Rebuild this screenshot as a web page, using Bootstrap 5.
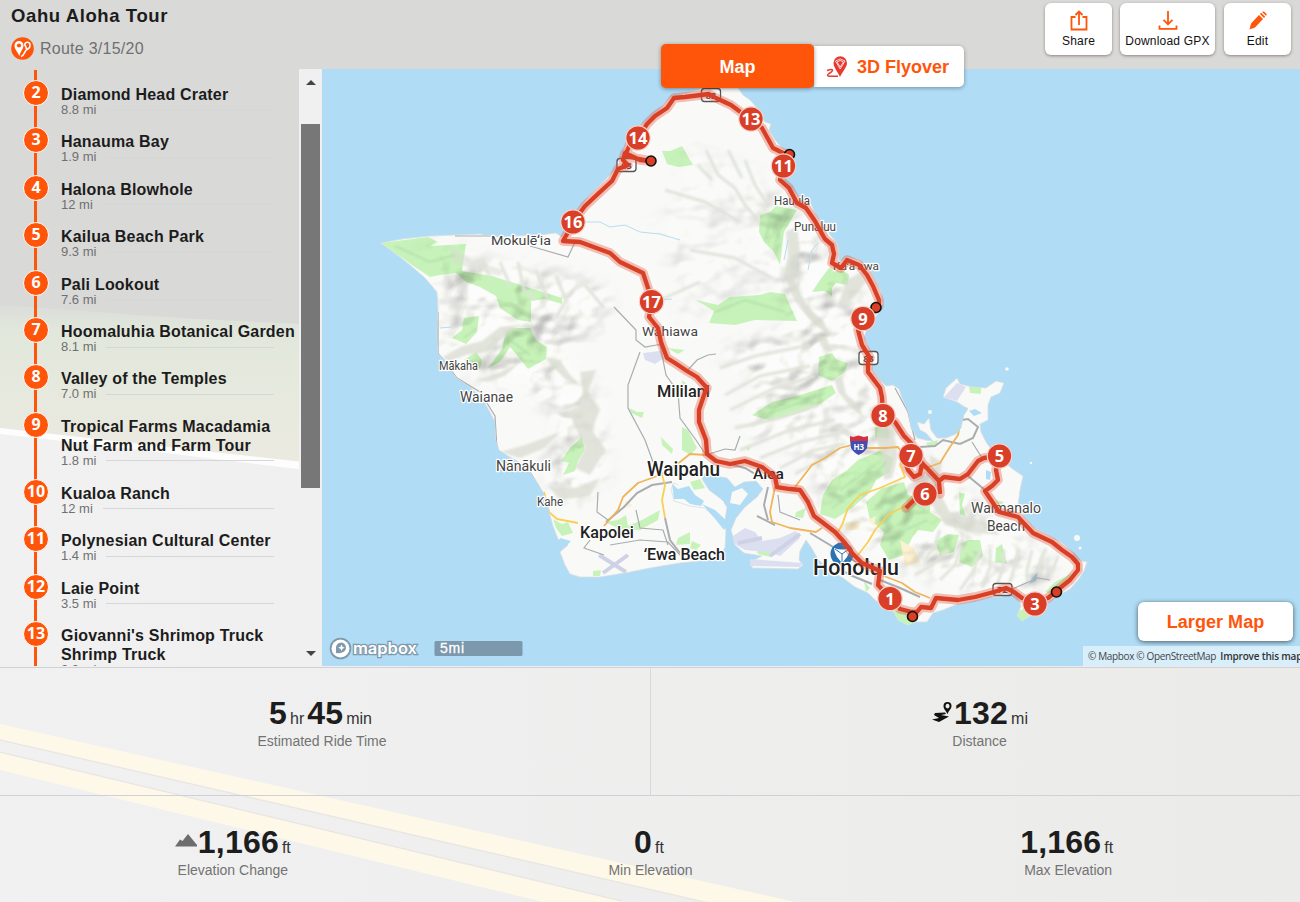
<!DOCTYPE html>
<html lang="en">
<head>
    <meta charset="UTF-8">
    <meta name="viewport" content="width=device-width, initial-scale=1.0">
    <title>Oahu Aloha Tour</title>
    <!-- Bootstrap CSS -->
    <link href="https://cdn.jsdelivr.net/npm/bootstrap@5.3.2/dist/css/bootstrap.min.css" rel="stylesheet">
    <style>
        body {
            font-family: "Liberation Sans", Arial, sans-serif;
            color: #1c1c1c;
            background: #eeeeed;
            height: 902px;
            overflow: hidden;
        }
        .page-bg { position: absolute; left: 0; top: 0; z-index: -1; }
        .orange { color: #ff550b; }

        /* Header */
        .top-bar { height: 69px; padding: 3px 9px 0 11px; }
        .tour-name { font-size: 18.5px; font-weight: 700; letter-spacing: .6px; line-height: 20px; margin: 3px 0 0; }
        .tour-sub { font-size: 16px; color: #707070; letter-spacing: .25px; line-height: 22px; margin-top: 11px; gap: 6px; }
        .tool-btn {
            height: 52px; border-radius: 6px; background: #fff; color: #111;
            font-size: 12px; line-height: 14px; padding: 7px 0 0; border: 0; gap: 3px;
            letter-spacing: .2px; box-shadow: 0 1px 3px rgba(80, 60, 50, .55); white-space: nowrap;
        }
        .w-share { width: 67px; }
        .w-gpx { width: 95px; margin: 0 9px 0 8px; }
        .w-edit { width: 67px; }

        /* Stop list */
        .main-row { height: 597px; }
        .side { width: 322px; }
        .stops { width: 299px; padding: 0; margin: 0; list-style: none; overflow: hidden; position: relative; }
        .stops::before { content: ""; position: absolute; left: 34px; top: 1px; bottom: 0; width: 3px; background: #ff550b; }
        .stop { padding: 17px 0 0 23px; height: 47.4px; position: relative; gap: 12px; }
        .stop-tall { height: 67px; }
        .stop-no {
            width: 26px; height: 26px; margin-top: -6px; flex: none; border-radius: 50%;
            border: 1.5px solid #fff; background: #ff550b; color: #fff;
            font-family: "Open Sans", sans-serif; font-weight: 700; font-size: 16px; line-height: 22px; text-align: center;
        }
        .stop-name { font-size: 16px; font-weight: 700; line-height: 18.8px; letter-spacing: .2px; white-space: nowrap; }
        .stop-dist { font-size: 13px; line-height: 12.4px; margin-top: -.8px; color: #707070; gap: 10px; width: 213px; white-space: nowrap; }
        .stop-dist::after { content: ""; flex: 1; height: 1px; background: #d4d6d7; }
        .scroller { width: 23px; background: #f0f0f0; padding: 11px 2px 10px; }
        .scroller-thumb { height: 364px; background: #777; width: 19px; margin-top: 39px; }

        /* Map */
        .map-pane { width: 978px; position: relative; }
        .map-pane > svg { display: block; }
        .view-tabs { position: absolute; left: 339px; top: -25px; }
        .tab-map {
            width: 153px; height: 44px; background: #ff550b; color: #fff; border-radius: 5px; z-index: 1;
            font-size: 18px; font-weight: 700; line-height: 47px; text-align: center; box-shadow: 0 1px 4px rgba(0, 0, 0, .4);
        }
        .tab-fly {
            width: 150px; height: 41px; background: #fff; border-radius: 0 5px 5px 0; gap: 9px;
            font-size: 18px; font-weight: 700; padding: 2px 0 0 12px; box-shadow: 0 1px 4px rgba(0, 0, 0, .35);
        }
        .larger {
            position: absolute; right: 7px; bottom: 25px; width: 155px; height: 39px; background: #fff; border-radius: 6px;
            font-size: 18px; font-weight: 700; line-height: 40px; text-align: center; letter-spacing: .05px;
            box-shadow: 0 1px 5px rgba(0, 0, 0, .6);
        }
        .attrib {
            position: absolute; right: 0; bottom: 0; width: 217px; height: 20px; padding-left: 5px; overflow: hidden;
            background: rgba(255, 255, 255, .5); font: 10px/21px "Open Sans", sans-serif; color: #444; white-space: nowrap;
            letter-spacing: -.36px;
        }
        .attrib b { font-weight: 600; margin-left: 2px; color: #333; letter-spacing: -.2px; }
        .relief { mix-blend-mode: multiply; opacity: .42; }
        .place { font-family: Roboto, "Noto Sans", sans-serif; fill: #444; stroke: #fff; stroke-width: 2.5px; paint-order: stroke; stroke-linejoin: round; }
        .place-big { fill: #222; font-weight: 500; }
        .pin text { font: 700 16.5px "Open Sans", sans-serif; fill: #fff; text-anchor: middle; }

        /* Stats */
        .stats-row { border-top: 1px solid #d0d1d5; text-align: center; }
        .stats-a { height: 128px; margin-top: 1px; }
        .stats-a > div { padding-top: 29px; }
        .stats-a > div:first-child { width: 651px; border-right: 1px solid #d8d9db; padding-right: 6px; }
        .stats-a > div:last-child { width: 649px; padding-left: 8px; }
        .stats-b { height: 107px; padding: 30px 23px 0 24px; }
        .num-line { font-size: 16px; line-height: 33px; height: 34px; color: #333; white-space: nowrap; }
        .num-line b { font-size: 32px; color: #1d1d1d; letter-spacing: .2px; margin: 0 3px; }
        .num-line > b:first-child { margin-left: -3px; }
        .num-line svg + div b { margin-left: 0; }
        .num-label { font-size: 14px; line-height: 20px; color: #737373; }
    </style>
</head>
<body>
    <!-- Road backdrop -->
    <svg class="page-bg" width="1300" height="902" viewBox="0 0 1300 902">
        <defs>
            <linearGradient id="verge" x1="0" y1="0" x2="0" y2="1">
                <stop offset="0" stop-color="#dbddd9"/>
                <stop offset=".15" stop-color="#e1e7dc"/>
                <stop offset=".5" stop-color="#e6e9dd"/>
                <stop offset="1" stop-color="#eceae1"/>
            </linearGradient>
            <linearGradient id="road" x1="0" y1="0" x2="1" y2="0">
                <stop offset="0" stop-color="#f1f1f1"/>
                <stop offset="1" stop-color="#ebebea"/>
            </linearGradient>
        </defs>
        <rect width="1300" height="902" fill="url(#road)"/>
        <path d="M0 0H1300V300L322 330L180 322L0 308Z" fill="#d9d9d8"/>
        <path d="M0 305L180 318L322 325V468L0 428Z" fill="url(#verge)"/>
        <path d="M0 428L150 445L322 464V472L150 451L0 434Z" fill="#fdfdfd"/>
        <path d="M0 724L795 902H708L0 739Z" fill="#fef8e9"/>
        <path d="M0 753L622 902H543L0 770Z" fill="#fef8e9"/>
        <path d="M0 740L708 903M0 752L622 901" stroke="#e9e4de" fill="none"/>
    </svg>

    <header class="top-bar d-flex justify-content-between">
        <div>
            <h1 class="tour-name">Oahu Aloha Tour</h1>
            <div class="tour-sub d-flex align-items-center">
                <svg width="23" height="23" viewBox="0 0 23 23">
                    <circle cx="11.5" cy="11.5" r="11.3" fill="#ff550b"/>
                    <path d="M8.500 19C6 14 3.500 12 3.500 8.500A4.500 4.500 0 0 1 12.500 8.500C12.500 12 9.500 14 8.500 19Z" fill="#fff"/>
                    <circle cx="8" cy="8.500" r="2.100" fill="#ff550b"/>
                    <path d="M10 19.500C14.500 18 12.500 14.500 16 12.500C19 11 19.500 8.500 18.800 6.500A2.800 2.800 0 0 0 13.700 7.500C14 9 15.500 10 15.300 12" fill="none" stroke="#fff" stroke-width="1.600"/>
                </svg>
                <span>Route 3/15/20</span>
            </div>
        </div>
        <div class="d-flex">
            <button class="tool-btn w-share d-flex flex-column align-items-center">
                <svg width="20" height="21" viewBox="0 0 20 21" fill="none" stroke="#ff550b" stroke-width="1.800">
                    <path d="M6.500 7H2.500V19.500H17.500V7H13.500M10 15V1.500M6.500 5L10 1.500L13.500 5"/>
                </svg>
                <span>Share</span>
            </button>
            <button class="tool-btn w-gpx d-flex flex-column align-items-center">
                <svg width="20" height="21" viewBox="0 0 20 21" fill="none" stroke="#ff550b" stroke-width="1.800">
                    <path d="M10 1V14M5.500 9.800L10 14.300L14.500 9.800M1.500 15.500V18.800H18.500V15.500"/>
                </svg>
                <span>Download GPX</span>
            </button>
            <button class="tool-btn w-edit d-flex flex-column align-items-center">
                <svg width="20" height="21" viewBox="0 0 20 21" fill="#ff550b">
                    <path d="M1.500 19.500L3 13.500L11 5L15 9L7 17.500ZM12 4L13.200 2.800L17.200 6.800L16 8ZM14.200 1.900L15 1.500Q15.800 1.200 16.500 2L18.300 3.800Q19 4.500 18.500 5.300L17.900 5.800Z"/>
                </svg>
                <span>Edit</span>
            </button>
        </div>
    </header>

    <main class="main-row d-flex">
        <aside class="side d-flex">
            <ul class="stops">
                <li class="stop d-flex"><span class="stop-no">2</span><div><div class="stop-name">Diamond Head Crater</div><div class="stop-dist d-flex align-items-center">8.8 mi</div></div></li>
                <li class="stop d-flex"><span class="stop-no">3</span><div><div class="stop-name">Hanauma Bay</div><div class="stop-dist d-flex align-items-center">1.9 mi</div></div></li>
                <li class="stop d-flex"><span class="stop-no">4</span><div><div class="stop-name">Halona Blowhole</div><div class="stop-dist d-flex align-items-center">12 mi</div></div></li>
                <li class="stop d-flex"><span class="stop-no">5</span><div><div class="stop-name">Kailua Beach Park</div><div class="stop-dist d-flex align-items-center">9.3 mi</div></div></li>
                <li class="stop d-flex"><span class="stop-no">6</span><div><div class="stop-name">Pali Lookout</div><div class="stop-dist d-flex align-items-center">7.6 mi</div></div></li>
                <li class="stop d-flex"><span class="stop-no">7</span><div><div class="stop-name">Hoomaluhia Botanical Garden</div><div class="stop-dist d-flex align-items-center">8.1 mi</div></div></li>
                <li class="stop d-flex"><span class="stop-no">8</span><div><div class="stop-name">Valley of the Temples</div><div class="stop-dist d-flex align-items-center">7.0 mi</div></div></li>
                <li class="stop stop-tall d-flex"><span class="stop-no">9</span><div><div class="stop-name">Tropical Farms Macadamia<br>Nut Farm and Farm Tour</div><div class="stop-dist d-flex align-items-center">1.8 mi</div></div></li>
                <li class="stop d-flex"><span class="stop-no">10</span><div><div class="stop-name">Kualoa Ranch</div><div class="stop-dist d-flex align-items-center">12 mi</div></div></li>
                <li class="stop d-flex"><span class="stop-no">11</span><div><div class="stop-name">Polynesian Cultural Center</div><div class="stop-dist d-flex align-items-center">1.4 mi</div></div></li>
                <li class="stop d-flex"><span class="stop-no">12</span><div><div class="stop-name">Laie Point</div><div class="stop-dist d-flex align-items-center">3.5 mi</div></div></li>
                <li class="stop stop-tall d-flex"><span class="stop-no">13</span><div><div class="stop-name">Giovanni's Shrimop Truck<br>Shrimp Truck</div><div class="stop-dist d-flex align-items-center">2.2 mi</div></div></li>
            </ul>
            <div class="scroller d-flex flex-column align-items-center">
                <svg width="10" height="5" viewBox="0 0 10 5"><path d="M0 5L5 0L10 5Z" fill="#444"/></svg>
                <div class="scroller-thumb"></div>
                <svg class="mt-auto" width="10" height="5" viewBox="0 0 10 5"><path d="M0 0L5 5L10 0Z" fill="#444"/></svg>
            </div>
        </aside>

        <section class="map-pane">
            <svg width="978" height="597" viewBox="322 69 978 597">
                <defs>
                    <path id="coast" d="M381 243L402 239L430 236L455 235L480 234L493 237L540 235L556 233L562 237L569 226L577 211L590 195L605 180L617 168L623 158L625 146L631 134L645 122L660 109L670 98L690 92L703 88L738 88L743 95L750 100L757 108L765 122L771 124L769 130L775 140L782 148L789 152L794 158L790 165L782 172L783 180L792 189L800 199L811 204L816 215L824 225L831 236L837 243L839 253L838 263L847 257L859 260L869 269L875 280L881 292L883 304L878 313L873 322L866 331L864 338L868 347L873 358L872 370L880 380L886 386L893 385L899 389L902 398L908 412L911 428L917 438L925 440L933 441L926 433L920 430L917 422L924 424L929 418L931 430L937 438L946 438L956 434L961 428L964 415L968 409L957 402L943 397L946 388L957 378L960 384L972 387L986 388L996 381L1004 383L1000 393L991 397L988 405L988 420L980 424L981 432L986 442L993 452L1005 463L1014 470L1023 476L1020 490L1018 505L1024 517L1034 528L1048 535L1062 543L1072 552L1077 560L1087 562L1084 571L1078 580L1070 589L1058 596L1047 603L1038 609L1030 616L1022 621L1017 616L1021 606L1018 597L1010 592L1002 597L990 597L970 602L955 605L943 610L933 613L927 622L916 622L908 625L898 620L894 612L884 607L874 599L868 593L855 587L843 578L828 569L818 559L811 547L806 540L800 551L799 560L803 565L798 569L752 568L752 561L762 556L744 553L735 545L731 530L736 518L745 507L757 497L763 489L756 481L744 482L735 487L727 478L716 476L705 473L702 479L709 490L721 499L727 507L725 520L715 516L704 508L690 506L674 501L671 489L674 483L686 489L694 500L708 506L718 514L726 530L725 548L718 556L700 561L680 563L650 568L625 573L600 577L580 577L570 574L565 565L560 552L568 545L558 539L553 526L550 515L547 500L540 487L530 472L519 462L508 456L499 450L496 440L495 422L491 414L482 398L470 387L457 378L450 370L445 360L438 353L437 335L438 310L437 292L425 278L410 265L396 254Z"/>
                    <clipPath id="land"><use href="#coast"/></clipPath>
                    <filter id="soft"><feGaussianBlur stdDeviation="1.3"/></filter>
                    <filter id="wide"><feGaussianBlur stdDeviation="10"/></filter>
                    <!-- Relief lighting for the mountain ranges -->
                    <filter id="hills" x="0" y="0" width="1" height="1" color-interpolation-filters="sRGB">
                        <feTurbulence type="fractalNoise" baseFrequency=".022 .028" numOctaves="3" seed="7"/>
                        <feColorMatrix values="0 0 0 0 0  0 0 0 0 0  0 0 0 0 0  1 0 0 0 0"/>
                        <feGaussianBlur stdDeviation="1"/>
                        <feDiffuseLighting surfaceScale="12" diffuseConstant="1.14" lighting-color="#fbfbf2">
                            <feDistantLight azimuth="225" elevation="62"/>
                        </feDiffuseLighting>
                    </filter>
                    <mask id="ranges" maskUnits="userSpaceOnUse" x="322" y="69" width="978" height="597">
                        <g filter="url(#wide)" fill="#fff">
                            <path d="M420 240L480 262L560 275L610 290L600 330L560 345L600 400L605 480L570 510L545 470L560 430L540 390L480 380L440 350L445 290Z"/>
                            <path d="M750 180L790 210L830 250L865 300L860 360L880 410L900 450L950 480L1000 530L1060 560L1040 590L960 590L890 560L840 520L790 440L740 430L760 390L720 350L790 330L770 270Z"/>
                            <path d="M690 140L750 170L800 280L680 320L660 230Z" opacity=".4"/>
                        </g>
                    </mask>
                </defs>
                <rect x="322" y="69" width="978" height="597" fill="#b0dcf5"/>
                <use href="#coast" fill="#f9faf8" stroke="#d8dee0" stroke-width=".8"/>
                <g fill="#f9faf8">
                    <path d="M732 492L742 488L748 494L740 505L730 503Z"/>
                    <path d="M672 478L700 478L710 492L724 502L725 518L712 513L698 504L688 496Z"/>
                    <circle cx="930" cy="412" r="2"/><circle cx="1007" cy="369" r="1.800"/><circle cx="1077" cy="538" r="3"/><circle cx="1080" cy="548" r="1.500"/><circle cx="1031" cy="463" r="1.200"/>
                    <path d="M750 559L803 563L800 567L750 566Z" fill="#dcdff0"/>
                </g>
                <path d="M672 484L678 489L689 486L695 495L704 501L701 506L690 504L684 499L674 499ZM702 504L715 510L728 522L724 530L716 520ZM969 411L975 409L982 413L974 416ZM986 470L991 472L990 480L986 479ZM1032 578L1038 572L1036 581L1028 585ZM560 538L571 541L566 546L558 545Z" fill="#b0dcf5"/>

                <g clip-path="url(#land)">
                    <!-- Vegetation -->
                    <g fill="#c7f3bb">
                        <path d="M381 243L428 237L438 242L430 246L466 244L462 271L492 276L530 288L562 298L562 304L545 299L531 301L531 322L518 320L500 308L496 296L480 287L466 282L456 273L440 275L430 277L412 265Z"/>
                        <path d="M464 318L479 316L477 332L466 344L452 338L462 330Z"/>
                        <path d="M506 331L512 328L530 328L536 340L547 347L546 359L528 369L521 360L510 347L500 362L488 368L502 349Z"/>
                        <path d="M464 360L476 352L482 360L480 369L472 362Z"/>
                        <path d="M662 151L670 151L682 146L693 165L678 167L667 164Z"/>
                        <path d="M760 215L770 212L776 206L797 210L784 232L780 265L774 252L764 242L759 232Z"/>
                        <path d="M829 268L842 270L849 275L848 285L836 283L832 288L832 296L824 291L812 292L820 280Z"/>
                        <path d="M696 300L718 305L730 297L760 295L770 292L785 294L797 321L755 320L735 325L709 323L714 311Z"/>
                        <path d="M819 357L832 353L837 360L848 363L844 373L832 381L818 375Z"/>
                        <path d="M752 415L772 402L800 395L832 385L836 393L820 404L806 411L770 421Z"/>
                        <path d="M875 427L888 427L890 438L875 437Z"/>
                        <path d="M570 448L582 437L585 449L578 461L575 471L563 475L569 463L561 461Z"/>
                        <path d="M823 495L832 480L846 471L858 460L880 451L893 458L890 472L876 480L870 492L852 508L835 519L820 514Z"/>
                        <path d="M866 502L882 488L904 482L908 495L930 500L930 512L942 520L933 532L918 530L912 538L904 555L889 560L880 545L884 532L870 520Z"/>
                        <path d="M935 541L948 534L959 535L954 552L940 556Z"/><path d="M961 544L968 540L980 540L983 556L972 567L959 562Z"/><path d="M996 548L1002 544L1007 564L995 562Z"/>
                        <path d="M959 492L965 494L962 505L966 517L960 514Z"/><path d="M969 387L981 387L981 394L970 393Z"/>
                        <path d="M893 611L905 610L918 619L915 626L898 625Z"/><path d="M1018 611L1033 606L1026 623L1016 620Z"/><path d="M1045 592L1055 582L1072 573L1065 586L1055 595Z"/>
                        <path d="M629 408L637 412L644 412L642 418L631 413Z"/><path d="M661 437L673 449L672 454L662 445Z"/><path d="M682 427L688 430L692 438L697 448L690 455L682 450Z"/>
                        <path d="M553 519L562 524L568 522L573 533L562 536L556 528Z"/><path d="M605 522L618 520L626 515L628 526L642 520L660 510L658 520L640 530L620 529Z"/><path d="M678 538L690 532L690 544L676 545Z"/><path d="M692 541L701 545L696 550L690 548Z"/>
                        <path d="M690 482L700 479L705 488L694 490Z"/><path d="M667 348L685 350L678 354Z"/><path d="M756 549L773 551L770 557L758 554Z"/><path d="M593 571L601 570L600 576L593 576Z"/>
                        <path d="M682 380L688 385L683 390ZM745 446L751 447L748 451ZM796 512L806 508L803 518L795 517ZM926 443L938 440L936 446L928 446ZM996 500L1004 502L998 508ZM864 581L870 588L866 592Z"/>
                    </g>
                    <!-- Beaches, town blocks, airfields -->
                    <g fill="#fdf1d4"><path d="M900 540L914 548L920 562L905 566ZM845 523L862 521L857 530L846 530ZM625 500L633 506L627 508ZM918 438L926 434L924 440ZM868 520L876 516L874 526Z"/></g>
                    <g fill="#dcdff0">
                        <path d="M733 536L745 528L755 532L762 541L780 538L796 531L800 538L780 556L768 552L745 550L733 543Z"/>
                        <path d="M643 353L660 351L664 358L655 364L645 360Z"/>
                        <path d="M944 397L957 383L966 387L957 401Z"/>
                    </g>
                    <path d="M599 555L626 572M603 573L628 555M770 556L800 534M738 543L762 538" stroke="#cfd2e6" stroke-width="4"/>

                    <rect class="relief" x="380" y="80" width="710" height="550" filter="url(#hills)" mask="url(#ranges)"/>

                    <!-- Ridge shadows -->
                    <g fill="#d9dbd0" filter="url(#soft)" opacity=".75">
                        <path d="M443 357L462 346L482 341L500 327L520 325L505 336L488 352L466 355L448 362Z"/>
                        <path d="M478 380L500 372L520 362L505 376L488 382ZM545 357L560 360L568 372L580 386L566 380L552 366Z"/>
                        <path d="M580 372L596 370L588 392L600 410L592 430L606 450L590 475L575 468L585 448L572 420L584 400Z"/>
                        <path d="M500 452L525 445L560 432L545 448L520 458ZM560 415L582 405L586 414L570 418ZM548 486L575 488L600 478L590 496L560 500Z"/>
                        <path d="M786 232L797 226L800 250L794 280L806 305L824 322L830 336L812 322L794 300L784 275L788 255Z"/>
                        <path d="M846 280L862 272L866 282L850 302L838 306ZM815 335L826 336L832 352L824 350Z"/>
                        <path d="M834 378L842 376L846 394L858 404L864 418L848 404L838 392ZM880 416L892 424L898 455L892 478L884 480L882 452L876 440Z"/>
                        <path d="M930 455L942 462L938 490L950 512L985 522L1000 535L970 532L945 525L932 505Z"/>
                        <path d="M450 245L475 262L505 270L500 276L470 268L452 262Z" opacity=".7"/>
                    </g>
                    <!-- Valleys -->
                    <g fill="none" stroke="#e0e3da" stroke-width="3" filter="url(#soft)">
                        <path d="M482 258L490 278M500 262L510 285M518 262L524 290L535 298M536 270L548 300M556 276L566 300L556 318M585 285L604 308"/>
                        <path d="M706 150L718 175L735 188L745 205L760 222M698 165L712 180M728 150L742 178M745 160L755 185L768 205M665 190L705 202L740 222M690 250L735 258L772 278M660 300L700 282"/>
                        <path d="M720 368L755 356L810 345M725 395L760 376L810 366M730 410L775 388L815 376M735 428L780 418L818 405M740 450L790 430L835 420M760 458L800 442L845 432M780 468L815 450L845 444M795 474L825 458"/>
                        <path d="M925 560L935 545L940 530M915 575L932 565L948 550M940 580L955 565L962 545M960 590L974 570L980 550M982 588L990 568L990 548M996 588L1003 568L1004 550M1010 582L1015 565L1018 550M1028 585L1027 570L1032 550M1040 575L1040 562L1046 548M1052 572L1058 556"/>
                    </g>
                    <g fill="none" stroke="#a9d8a2" stroke-width="2" opacity=".6" filter="url(#soft)"><path d="M395 246L430 262L455 255M770 220L765 240M785 215L775 245M715 312L745 300L785 312M840 490L875 465M832 508L870 480L886 462M875 506L905 496L925 510M890 545L905 530L928 520M510 340L530 355M768 414L825 393M460 325L472 322"/></g>
                    <!-- Streams -->
                    <path d="M584 222L600 222L610 227L625 225L640 232L660 234L680 240M660 300L672 299M784 260L788 240M808 270L812 250L818 243M440 328L452 327" fill="none" stroke="#b7dcef"/>
                    <!-- Minor roads -->
                    <g fill="none" stroke="#a9adb0" stroke-width="1.200">
                        <path d="M455 236L492 236M530 246L568 257L576 240M614 307L636 330L636 340L645 347L662 344M640 352L628 385L628 408L645 440L653 462M660 345L666 375L678 392L680 418L696 440L706 455M687 371L697 360L708 355L716 354M598 492L597 512L608 520M604 555L584 548L590 540M610 545L640 540L668 542L680 555M636 510L640 528L663 530L668 545M438 312L438 353L457 378L480 392L495 416L497 450L530 472L548 502"/>
                        <path stroke-width="2" d="M606 522L624 507L637 493L652 485L672 482M665 518L670 540L680 553M768 487L764 505L768 520M757 516L775 525M810 533L830 545L845 555L868 570M835 566L850 575L872 584M880 580L900 588L920 597M716 461L745 468L765 480M920 447L935 446L943 440L960 444L973 438L978 427L968 419L962 420M968 476L985 490"/>
                        <path d="M706 455L725 449L735 450L740 436M778 495L780 512L800 520M895 388L908 412L915 440M972 442L982 458M1010 590L1038 578L1050 580"/>
                    </g>
                    <!-- Highways -->
                    <g fill="none" stroke="#f0b45c" stroke-width="1.800" stroke-linejoin="round">
                        <path d="M604 526L618 510L623 497L638 483L660 475L680 462L690 454L706 455M775 487L770 512L772 522L790 528L816 532L822 528M795 487L812 465L825 458L840 448L852 445L865 448L885 448L898 447L903 455M920 470L940 463L948 450L958 435L962 413L967 408M884 576L902 583L915 592L930 598"/>
                        <path d="M903 455L900 465L905 477L880 488L860 495L848 508L842 525L838 532M905 506L888 515L875 530L868 542L858 555M544 492L549 512L557 519L578 523M662 475L665 485L662 500L665 518" stroke="#fbcf55"/>
                    </g>
                </g>

                <!-- Road shields -->
                <g fill="#fff" stroke="#555" stroke-width="1.300">
                    <rect x="701.500" y="88.500" width="19" height="13" rx="3"/><rect x="617" y="158.500" width="19" height="13" rx="3"/>
                    <rect x="859" y="351.500" width="19" height="13" rx="3"/><rect x="993" y="583.500" width="19" height="12" rx="3"/>
                </g>
                <g font-family="Open Sans" font-size="9" font-weight="700" fill="#444" text-anchor="middle">
                    <text x="711" y="98.500">83</text><text x="626.500" y="168.500">83</text><text x="868.500" y="361.500">83</text><text x="1002.500" y="593">72</text>
                </g>
                <path d="M850 440Q858.500 435 868 440L867 448Q864 453 858.500 455Q853 452 851 448Z" fill="#4150b0"/>
                <path d="M850 441V436L853 437L858.500 435.500L864 437L868 436V441Z" fill="#d5303f"/>
                <text x="858.800" y="450" font-family="Open Sans" font-size="8" font-weight="700" fill="#fff" text-anchor="middle">H3</text>
                <circle cx="842" cy="554" r="11.500" fill="#2c73b4"/>
                <path d="M834 548Q842 551 850 548Q850 552 847 557L842 563L837 557Q834 552 834 548Z" fill="#fff"/>
                <path d="M842 554V563M842 554L835 549M842 554L849 549" stroke="#2c73b4" fill="none"/>

                <!-- Place names -->
                <g class="place">
                    <text x="491" y="245" font-size="13.500" textLength="60" lengthAdjust="spacingAndGlyphs">Mokulēʻia</text>
                    <text x="774" y="205" font-size="12" textLength="36" lengthAdjust="spacingAndGlyphs">Hauula</text>
                    <text x="794" y="230.500" font-size="12" textLength="42" lengthAdjust="spacingAndGlyphs">Punaluu</text>
                    <text x="833" y="270" font-size="11.500" textLength="46" lengthAdjust="spacingAndGlyphs">Kaʻaʻawa</text>
                    <text x="642" y="336" font-size="13.500" textLength="56" lengthAdjust="spacingAndGlyphs">Wahiawa</text>
                    <text x="439" y="369.500" font-size="12" textLength="39" lengthAdjust="spacingAndGlyphs">Mākaha</text>
                    <text x="460" y="401.500" font-size="14" textLength="53" lengthAdjust="spacingAndGlyphs">Waianae</text>
                    <text x="496" y="470.500" font-size="14" textLength="55" lengthAdjust="spacingAndGlyphs">Nānākuli</text>
                    <text x="537" y="506" font-size="12" textLength="26" lengthAdjust="spacingAndGlyphs">Kahe</text>
                    <text x="971" y="513" font-size="14" textLength="70" lengthAdjust="spacingAndGlyphs">Waimanalo</text>
                    <text x="987" y="530.500" font-size="14" textLength="38" lengthAdjust="spacingAndGlyphs">Beach</text>
                </g>
                <g class="place place-big">
                    <text x="657" y="397" font-size="16.500" textLength="53" lengthAdjust="spacingAndGlyphs">Mililani</text>
                    <text x="647" y="475.500" font-size="19.500" textLength="73" lengthAdjust="spacingAndGlyphs">Waipahu</text>
                    <text x="753" y="479" font-size="15.500" textLength="31" lengthAdjust="spacingAndGlyphs">Aiea</text>
                    <text x="580" y="537.500" font-size="16.500" textLength="54" lengthAdjust="spacingAndGlyphs">Kapolei</text>
                    <text x="644" y="559.500" font-size="16" textLength="81" lengthAdjust="spacingAndGlyphs">ʻEwa Beach</text>
                    <text x="813" y="574.500" font-size="21.500" textLength="86" lengthAdjust="spacingAndGlyphs">Honolulu</text>
                </g>

                <!-- Route, halo first -->
                <path id="route" d="M890 598L878 585L880 571L862 563L852 553L845 543L835 532L822 522L814 516L808 502L800 490L790 489L777 487L775 477L762 467L745 461L730 464L716 461L707 454L706 440L699 422L699 410L704 395L707 388L697 377L687 371L675 363L667 358L661 342L658 328L649 317L652 301L648 288L643 273L620 262L610 253L580 242L563 241L567 234L573 222L585 206L600 192L612 181L618 169L628 165L623 160L625 153L640 160L650 161L625 156L630 144L638 138L647 124L655 116L667 108L674 98L685 97L709 94L716 98L731 105L750 119L762 128L773 148L783 153L789 154L783 166L780 180L789 188L797 203L806 208L815 221L821 232L825 239L832 245L834 254L832 263L841 268L847 260L859 265L867 275L873 286L879 300L879 306L863 318L858 330L862 345L870 358L868 362L868 372L880 388L882 397L883 415L895 422L904 436L911 443L922 463L939 481L944 477L960 479L968 474L978 461L984 458L999 456L996 470L998 480L992 486L985 491L993 503L999 512L1018 517L1033 533L1052 542L1062 550L1072 557L1078 564L1078 570L1070 580L1060 588L1048 598L1035 603L1022 598L1014 592L1006 588L994 592L975 597L958 600L936 598L931 608L921 607L917 612L912 612L900 609L890 598M922 463L920 474L914 477L908 470L905 462M939 481L940 494M925 494L914 500L906 508" fill="none" stroke="#e4523e" stroke-opacity=".36" stroke-width="9.500" stroke-linejoin="round" stroke-linecap="round"/>
                <g fill="none" stroke="#d93f24" stroke-width="4.300" stroke-linejoin="round" id="routeLine"></g>

                <g fill="#d93f24" stroke="#111" stroke-width="1.600">
                    <circle cx="789.500" cy="154.500" r="5"/><circle cx="651" cy="161" r="5"/><circle cx="876" cy="307.500" r="5"/><circle cx="912.500" cy="616.500" r="5"/><circle cx="1056.500" cy="592" r="5"/>
                </g>
                <g class="pin" id="pins"></g>

                <!-- Logo and scale -->
                <circle cx="340.500" cy="648.500" r="10.800" fill="#7f99ab"/>
                <circle cx="340.500" cy="648.500" r="9" fill="#fff"/>
                <path d="M336 653V648A5 5 0 1 1 342 652.500Q340 653.500 336 653Z" fill="#7f99ab"/>
                <path d="M341.500 644.500L342.500 646.800L344.800 647.800L342.500 648.800L341.500 651L340.500 648.800L338.200 647.800L340.500 646.800Z" fill="#fff"/>
                <text x="353" y="654" font-family="Inter" font-size="16" font-weight="600" fill="#fff" stroke="#7f99ab" stroke-width="2.500" paint-order="stroke" textLength="64" lengthAdjust="spacingAndGlyphs">mapbox</text>
                <rect x="434.500" y="641" width="88" height="15" rx="1.500" fill="#7c98ac"/>
                <text x="440" y="653" font-family="Liberation Sans" font-size="14" fill="#fff" stroke="#fff" stroke-width=".3" textLength="24">5mi</text>
            </svg>

            <div class="view-tabs d-flex align-items-center">
                <div class="tab-map position-relative">Map</div>
                <div class="tab-fly orange d-flex align-items-center">
                    <svg width="22" height="22" viewBox="0 0 22 22">
                        <path d="M14 21C11 15 7.500 11 7.500 7A6.700 6.700 0 0 1 21 7C21 11 17 15 14 21Z" fill="#e8392f"/>
                        <path d="M9.500 5L14.200 3L19 5L14.200 13ZM11 6L14.200 11L17.500 6L14.200 4.500Z" fill="none" stroke="#fff" stroke-width=".8"/>
                        <path d="M1 14.500Q7 12.500 6.500 14.500Q6 16 3 17.500Q0 19.500 3 20.200H12" fill="none" stroke="#e8392f" stroke-width="1.500"/>
                    </svg>
                    <span>3D Flyover</span>
                </div>
            </div>
            <div class="larger orange">Larger Map</div>
            <div class="attrib">© Mapbox © OpenStreetMap <b>Improve this map</b></div>
        </section>
    </main>

    <section class="stats-row stats-a d-flex">
        <div>
            <div class="num-line"><b>5</b>hr<b>45</b>min</div>
            <div class="num-label">Estimated Ride Time</div>
        </div>
        <div>
            <div class="num-line d-flex justify-content-center">
                <svg class="mt-1" width="23" height="22" viewBox="0 0 23 22">
                    <path d="M16.500 13C14.500 9 12.500 8 12.500 5A4 4 0 0 1 20.500 5C20.500 8 18 9 16.500 13ZM16.500 2.800A2 2.300 0 1 0 16.600 2.800Z" fill="#111" fill-rule="evenodd"/>
                    <path d="M4 12L14 11.500L15 13L10 14L18 15.500L8 21L1 18.500L8 17L3 14Z" fill="#111"/>
                </svg>
                <div><b>132</b>mi</div>
            </div>
            <div class="num-label">Distance</div>
        </div>
    </section>
    <section class="stats-row stats-b">
        <div class="row g-0">
            <div class="col-4">
                <div class="num-line d-flex justify-content-center">
                    <svg width="23" height="14" viewBox="0 0 23 14" class="mt-2"><path d="M0 12.500L5 5.500L7.500 7L13 0L22 11V12.500Z" fill="#6d6d6d"/></svg>
                    <div><b>1,166</b>ft</div>
                </div>
                <div class="num-label">Elevation Change</div>
            </div>
            <div class="col-4">
                <div class="num-line"><b>0</b>ft</div>
                <div class="num-label">Min Elevation</div>
            </div>
            <div class="col-4">
                <div class="num-line"><b>1,166</b>ft</div>
                <div class="num-label">Max Elevation</div>
            </div>
        </div>
    </section>

    <!-- Bootstrap Bundle with Popper -->
    <script src="https://cdn.jsdelivr.net/npm/bootstrap@5.3.2/dist/js/bootstrap.bundle.min.js"></script>

    <script>
        // Solid line on top of the route halo
        const line = document.createElementNS('http://www.w3.org/2000/svg', 'path');
        line.setAttribute('d', document.getElementById('route').getAttribute('d'));
        document.getElementById('routeLine').appendChild(line);

        // Numbered stops: [number, x, y]
        const stops = [
            [13, 751, 119], [14, 638, 138], [11, 783.5, 166], [16, 573, 222], [17, 651.5, 301.5], [9, 863, 318.5],
            [8, 883, 415.5], [7, 911, 455.5], [6, 925, 494], [5, 999.5, 456], [1, 890, 598.5], [3, 1035, 604]
        ];
        document.getElementById('pins').innerHTML = stops.map(([n, x, y]) =>
            `<circle cx="${x}" cy="${y}" r="12.2" fill="#d93f28" stroke="#f7d3cc" stroke-width="1.2"/><text x="${x}" y="${y + 6}">${n}</text>`
        ).join('');
    </script>
</body>
</html>
